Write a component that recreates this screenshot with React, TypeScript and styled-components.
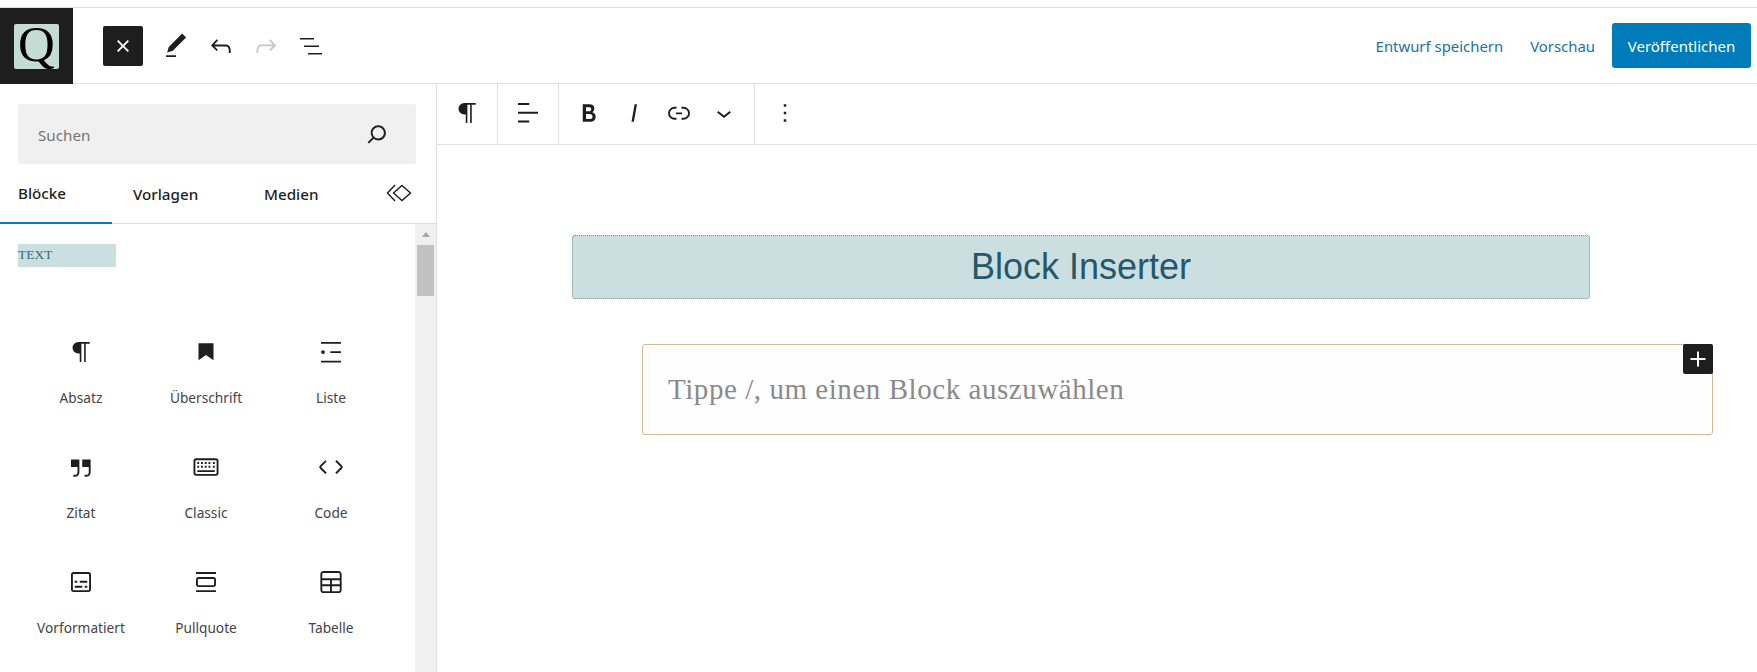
import React from "react";
import styled, { createGlobalStyle } from "styled-components";

const Global = createGlobalStyle`
  html, body { margin: 0; padding: 0; background: #fff; height: 672px; overflow: hidden; }
  body { font-family: "Noto Sans", "Open Sans", sans-serif; color: #1e1e1e; }
  * { box-sizing: border-box; }
`;

const Page = styled.div`
  width: 1757px; height: 672px; display: flex; flex-direction: column; overflow: hidden;
`;
const TopStrip = styled.div`
  height: 8px; flex: none; border-bottom: 1px solid #dcdcde;
`;
const Header = styled.header`
  height: 76px; flex: none; display: flex; align-items: center; border-bottom: 1px solid #e0e0e0;
`;
const LogoTile = styled.div`
  width: 73px; height: 76px; margin-bottom: -1px; flex: none; background: #1e1e1e; display: flex; align-items: center; justify-content: center;
`;
const LogoMark = styled.div`
  width: 45px; height: 45px; background: #c5dcd5; border-radius: 2px; color: #000;
  font: 51px/41px "Liberation Serif", serif; text-align: center; overflow: visible;
`;
const CloseButton = styled.button`
  width: 40px; height: 40px; margin: 0 10px 0 30px; border: 0; padding: 0; border-radius: 2px; background: #1e1e1e;
  display: flex; align-items: center; justify-content: center;
`;
const HeaderTool = styled.div`
  width: 45px; height: 40px; display: flex; align-items: center; justify-content: center;
`;
const HeaderRight = styled.div`
  margin-left: auto; display: flex; align-items: center; padding-right: 6px;
`;
const LinkAction = styled.span<{ $gap: number }>`
  color: #2271a1; font-size: 14.9px; margin-right: ${(p) => p.$gap}px; white-space: nowrap; padding-top: 1px;
`;
const PublishButton = styled.button`
  width: 139px; height: 45px; background: #007cba; color: #fff; border: 0; border-radius: 3px;
  font: 15px "Noto Sans", sans-serif; padding: 1px 0 0;
`;
const Main = styled.div`
  flex: 1; display: flex; min-height: 0;
`;
const Sidebar = styled.aside`
  width: 437px; flex: none; border-right: 1px solid #e0e0e0; display: flex; flex-direction: column;
`;
const SearchBox = styled.div`
  margin: 20px 20px 0 18px; height: 60px; flex: none; background: #f0f0f0; border-radius: 2px;
  display: flex; align-items: center; justify-content: space-between; padding: 0 24px 0 20px;
  color: #757575; font-size: 15.2px;
`;
const SearchLabel = styled.span`
  padding-top: 2px;
`;
const Tabs = styled.div`
  height: 60px; flex: none; display: flex; align-items: center; position: relative; border-bottom: 1px solid #dcdcde;
`;
const Tab = styled.div<{ $active?: boolean; $w: number; $pl: number }>`
  width: ${(p) => p.$w}px; height: 60px; padding-left: ${(p) => p.$pl}px; padding-top: 1px; display: flex; align-items: center;
  font-size: 15.2px; font-weight: 500; color: #1e1e1e; flex: none;
  border-bottom: ${(p) => (p.$active ? "2px solid #007cba" : "0")};
`;
const TabIcon = styled.div`
  display: flex; margin-left: 0; margin-top: -1px;
`;
const ListRow = styled.div`
  flex: 1; display: flex; min-height: 0;
`;
const BlockList = styled.div`
  flex: 1; padding: 20px 0 0 18px; min-width: 0;
`;
const CategoryLabel = styled.div`
  width: 98px; height: 23px; background: #cbdfe0; color: #3a6a74;
  font: 13.5px/22px "Liberation Serif", serif;
`;
const BlockGrid = styled.div`
  display: grid; grid-template-columns: repeat(3, 125px); grid-auto-rows: 115px; margin-top: 70px; margin-left: 0.5px;
`;
const BlockItem = styled.div`
  display: flex; flex-direction: column; align-items: center;
`;
const BlockLabel = styled.div`
  margin-top: 22px; font-size: 13.7px; line-height: 18px; color: #444; white-space: nowrap;
`;
const ScrollTrack = styled.div`
  width: 21px; flex: none; background: #f0f0f0; display: flex; flex-direction: column; align-items: center;
`;
const ScrollArrow = styled.div`
  margin-top: 8px; width: 0; height: 0; border-left: 4.5px solid transparent; border-right: 4.5px solid transparent;
  border-bottom: 5px solid #a6a6a6;
`;
const ScrollThumb = styled.div`
  margin-top: 8px; width: 17px; height: 51px; background: #c1c1c1;
`;
const Canvas = styled.main`
  flex: 1; min-width: 0; display: flex; flex-direction: column;
`;
const BlockToolbar = styled.div`
  height: 61px; flex: none; display: flex; border-bottom: 1px solid #e0e0e0;
`;
const ToolGroup = styled.div<{ $w: number; $pad?: number; $last?: boolean }>`
  width: ${(p) => p.$w}px; height: 60px; flex: none; display: flex; align-items: center; justify-content: center;
  padding: 0 ${(p) => p.$pad ?? 0}px 2px; border-right: ${(p) => (p.$last ? "0" : "1px solid #e0e0e0")};
`;
const ToolSlot = styled.div`
  width: 45px; height: 45px; flex: none; display: flex; align-items: center; justify-content: center;
`;
const HeadingBlock = styled.h2`
  margin: 90px 0 0 135px; width: 1018px; height: 64px; background: #cbdfe0; border-radius: 3px;
  border: 1px dotted #5fa58c; border-right: 1px solid #8fc5b5; color: #25586c;
  font: 400 36px/62px "Liberation Sans", Arial, sans-serif; text-align: center;
`;
const ParagraphBlock = styled.div`
  position: relative; margin: 45px 0 0 205px; width: 1071px; height: 91px; border: 1px solid #d2ba96; border-radius: 3px;
  background: #fefefe; color: #8a8a8a; padding-left: 25px;
  font: 29px/89px "Liberation Serif", "DejaVu Serif", serif; letter-spacing: 0.55px;
`;
const PlusButton = styled.div`
  position: absolute; top: -1px; right: -1px; width: 30px; height: 30px; background: #1e1e1e; border-radius: 2px;
  display: flex; align-items: center; justify-content: center;
`;

const Icon = ({ d, size = 30, color = "#1e1e1e" }: { d: string; size?: number; color?: string }) => (
  <svg width={size} height={size} viewBox="0 0 24 24" fill={color} aria-hidden>
    <path d={d} />
  </svg>
);

const P = {
  close: "M12 13.06l3.712 3.713 1.061-1.06L13.061 12l3.712-3.712-1.06-1.06L12 10.938 8.288 7.227l-1.061 1.06L10.939 12l-3.712 3.712 1.06 1.061L12 13.061z",
  pencil: "M20.1 5.1L16.9 2 6.2 12.7l-1.3 4.4 4.5-1.3L20.1 5.1zM4 20.8h8v-1.5H4v1.5z",
  undo: "M18.3 11.7c-.6-.6-1.4-.9-2.3-.9H6.7l2.9-3.3-1.1-1-4.5 5L8.5 16l1-1-2.7-2.7H16c.5 0 .9.2 1.3.5 1 1 1 3.4 1 4.5v.3h1.5v-.2c0-1.5 0-4.3-1.5-5.7z",
  redo: "M15.6 6.5l-1.1 1 2.9 3.3H8c-.9 0-1.7.3-2.3.9-1.4 1.5-1.4 4.2-1.4 5.6v.2h1.5v-.3c0-1.1 0-3.5 1-4.5.3-.3.7-.5 1.3-.5h9.2L14.5 15l1.1 1.1 4.6-4.6-4.6-5z",
  listView: "M1 4h14v1.500H1zM9 19h14v1.500H9zM5 11.500h15V13H5z",
  search: "M13 5c-3.3 0-6 2.7-6 6 0 1.4.5 2.7 1.3 3.7l-3.800 3.800 1.100 1.100 3.800-3.800c1 .8 2.300 1.300 3.700 1.300 3.300 0 6-2.700 6-6S16.300 5 13 5zm0 10.500c-2.500 0-4.500-2-4.500-4.500s2-4.500 4.500-4.500 4.500 2 4.500 4.500-2 4.500-4.500 4.500z",
  para: "M19 4h-9.200a4.600 4.600 0 000 9.200h1.200V20h1.300V5.300h2.200V20h1.300V5.300H19V4z",
  bookmark: "M6 5h12v13.500l-6-4.200-6 4.200z",
  list: "M4 4h16v1.300H4zM4 19h16v1.300H4zM11.500 11.400H20v1.300h-8.500zM5.600 10.500a1.500 1.500 0 100 3 1.500 1.500 0 000-3z",
  quote: "M13 6v6h5.200v4c0 .8-.2 1.400-.5 1.700-.6.6-1.600.6-2.500.5h-.3v1.500h.5c1 0 2.300-.1 3.300-1 .6-.6 1-1.600 1-2.800V6H13zm-9 6h5.200v4c0 .8-.2 1.400-.5 1.700-.6.6-1.600.6-2.500.5h-.3v1.500h.5c1 0 2.300-.1 3.300-1 .6-.6 1-1.600 1-2.800V6H4v6z",
  keyboard: "M20 5H4c-1.100 0-2 .9-2 2v10c0 1.100.9 2 2 2h16c1.100 0 2-.9 2-2V7c0-1.100-.9-2-2-2zm.5 12c0 .3-.2.5-.5.5H4c-.3 0-.5-.2-.5-.5V7c0-.3.2-.5.5-.5h16c.3 0 .5.2.5.5v10zM5 8h1.500v1.500H5zM8 8h1.500v1.500H8zM11 8h1.500v1.500H11zM14 8h1.500v1.500H14zM17.500 8H19v1.500h-1.500zM5 11h1.500v1.500H5zM8 11h1.500v1.500H8zM11 11h1.500v1.500H11zM14 11h1.500v1.500H14zM17.500 11H19v1.500h-1.500zM5 14.500h14V16H5z",
  code: "M20.800 10.700l-4.300-4.300-1.100 1.100 4.300 4.300c.1.1.1.3 0 .4l-4.300 4.300 1.100 1.100 4.300-4.300c.7-.8.7-1.900 0-2.600zM4.200 11.800l4.300-4.300-1-1-4.300 4.300c-.7.7-.7 1.800 0 2.500l4.300 4.300 1.100-1.100-4.300-4.300c-.2-.1-.2-.3-.1-.4z",
  pre: "M18 4H6c-1.100 0-2 .9-2 2v12c0 1.100.9 2 2 2h12c1.100 0 2-.9 2-2V6c0-1.100-.9-2-2-2zm.5 14c0 .3-.2.5-.5.5H6c-.3 0-.5-.2-.5-.5V6c0-.3.2-.5.5-.5h12c.3 0 .5.2.5.5v12zM7 16.500h6V15H7v1.500zm4-4h6V11h-6v1.500zM9 11H7v1.500h2V11zm6 5.500h2V15h-2v1.500z",
  pull: "M18 8H6c-1.100 0-2 .9-2 2v4c0 1.100.9 2 2 2h12c1.100 0 2-.9 2-2v-4c0-1.100-.9-2-2-2zm.5 6c0 .3-.2.5-.5.5H6c-.3 0-.5-.2-.5-.5v-4c0-.3.2-.5.5-.5h12c.3 0 .5.2.5.5v4zM4 4v1.500h16V4H4zm0 16h16v-1.500H4V20z",
  table: "M18 3.200H6c-1.400 0-2.500 1.100-2.500 2.500v12.600c0 1.400 1.100 2.500 2.500 2.500h12c1.400 0 2.500-1.100 2.500-2.500V5.700c0-1.400-1.100-2.500-2.500-2.500zM5 5.700c0-.6.4-1 1-1h12c.6 0 1 .4 1 1V9H5V5.700zM11.250 19.300H6c-.6 0-1-.4-1-1v-3h6.250v4zm0-5.500H5v-3.300h6.250v3.300zm7.750 4.500c0 .6-.4 1-1 1h-5.250v-4H19v3zm0-4.500h-6.250v-3.300H19v3.300z",
  align: "M13 5.500H4V4h9v1.500zm7 7H4V11h16v1.500zm-7 7H4V18h9v1.500z",
  bold: "M14.700 11.300c1-.6 1.500-1.600 1.500-3 0-2.300-1.300-3.400-4-3.400H7v14h5.800c1.400 0 2.500-.3 3.300-1 .8-.7 1.200-1.700 1.200-2.900.1-1.900-.8-3.100-2.600-3.700zm-5.100-4h2.300c.6 0 1.100.1 1.400.4.3.3.5.7.5 1.200s-.2 1-.5 1.200c-.3.3-.8.4-1.400.4H9.600V7.300zm4.600 9c-.4.3-1 .4-1.700.4H9.600v-3.900h2.900c.7 0 1.300.2 1.700.5.4.3.6.8.6 1.500s-.2 1.200-.6 1.500z",
  italic: "M12.500 5L10 19h1.900l2.500-14z",
  link: "M10 17.389H8.444A5.194 5.194 0 118.444 7H10v1.500H8.444a3.694 3.694 0 000 7.389H10v1.500zM14 7h1.556a5.194 5.194 0 010 10.390H14v-1.500h1.556a3.694 3.694 0 000-7.390H14V7zm-4.500 6h5v-1.500h-5V13z",
  chevron: "M17.500 11.600L12 16l-5.500-4.400.9-1.200L12 14l4.500-3.600 1 1.200z",
  more: "M13 19h-2v-2h2v2zm0-6h-2v-2h2v2zm0-6h-2V5h2v2z",
  plus: "M18 11.200h-5.200V6h-1.600v5.200H6v1.600h5.200V18h1.600v-5.200H18z",
};

const blocks = [
  { label: "Absatz", d: P.para },
  { label: "Überschrift", d: P.bookmark },
  { label: "Liste", d: P.list },
  { label: "Zitat", d: P.quote },
  { label: "Classic", d: P.keyboard },
  { label: "Code", d: P.code },
  { label: "Vorformatiert", d: P.pre },
  { label: "Pullquote", d: P.pull },
  { label: "Tabelle", d: P.table },
];

export default function App() {
  return (
    <Page>
      <Global />
      <TopStrip />
      <Header>
        <LogoTile>
          <LogoMark>Q</LogoMark>
        </LogoTile>
        <CloseButton>
          <Icon d={P.close} color="#fff" />
        </CloseButton>
        <HeaderTool><Icon d={P.pencil} /></HeaderTool>
        <HeaderTool><Icon d={P.undo} /></HeaderTool>
        <HeaderTool><Icon d={P.redo} color="#c8c8c8" /></HeaderTool>
        <HeaderTool><Icon d={P.listView} size={24} /></HeaderTool>
        <HeaderRight>
          <LinkAction $gap={27}>Entwurf speichern</LinkAction>
          <LinkAction $gap={17}>Vorschau</LinkAction>
          <PublishButton>Veröffentlichen</PublishButton>
        </HeaderRight>
      </Header>
      <Main>
        <Sidebar>
          <SearchBox>
            <SearchLabel>Suchen</SearchLabel>
            <Icon d={P.search} />
          </SearchBox>
          <Tabs>
            <Tab $active $w={112} $pl={18}>Blöcke</Tab>
            <Tab $w={132} $pl={21}>Vorlagen</Tab>
            <Tab $w={142} $pl={20}>Medien</Tab>
            <TabIcon>
              <svg width="26" height="20" viewBox="0 0 26 20" fill="none" stroke="#1e1e1e" strokeWidth="1.400">
                <path d="M9 2L1.500 10 9 18" />
                <path d="M16 2.500L24.500 10 16 17.500 7.500 10z" />
              </svg>
            </TabIcon>
          </Tabs>
          <ListRow>
            <BlockList>
              <CategoryLabel>TEXT</CategoryLabel>
              <BlockGrid>
                {blocks.map((b) => (
                  <BlockItem key={b.label}>
                    <Icon d={b.d} />
                    <BlockLabel>{b.label}</BlockLabel>
                  </BlockItem>
                ))}
              </BlockGrid>
            </BlockList>
            <ScrollTrack>
              <ScrollArrow />
              <ScrollThumb />
            </ScrollTrack>
          </ListRow>
        </Sidebar>
        <Canvas>
          <BlockToolbar>
            <ToolGroup $w={61}><Icon d={P.para} /></ToolGroup>
            <ToolGroup $w={61}><Icon d={P.align} /></ToolGroup>
            <ToolGroup $w={196} $pad={7.5}>
              <ToolSlot><Icon d={P.bold} /></ToolSlot>
              <ToolSlot><Icon d={P.italic} /></ToolSlot>
              <ToolSlot><Icon d={P.link} /></ToolSlot>
              <ToolSlot><Icon d={P.chevron} /></ToolSlot>
            </ToolGroup>
            <ToolGroup $w={59} $last><Icon d={P.more} /></ToolGroup>
          </BlockToolbar>
          <HeadingBlock>Block Inserter</HeadingBlock>
          <ParagraphBlock>
            Tippe /, um einen Block auszuwählen
            <PlusButton>
              <Icon d={P.plus} color="#fff" />
            </PlusButton>
          </ParagraphBlock>
        </Canvas>
      </Main>
    </Page>
  );
}
